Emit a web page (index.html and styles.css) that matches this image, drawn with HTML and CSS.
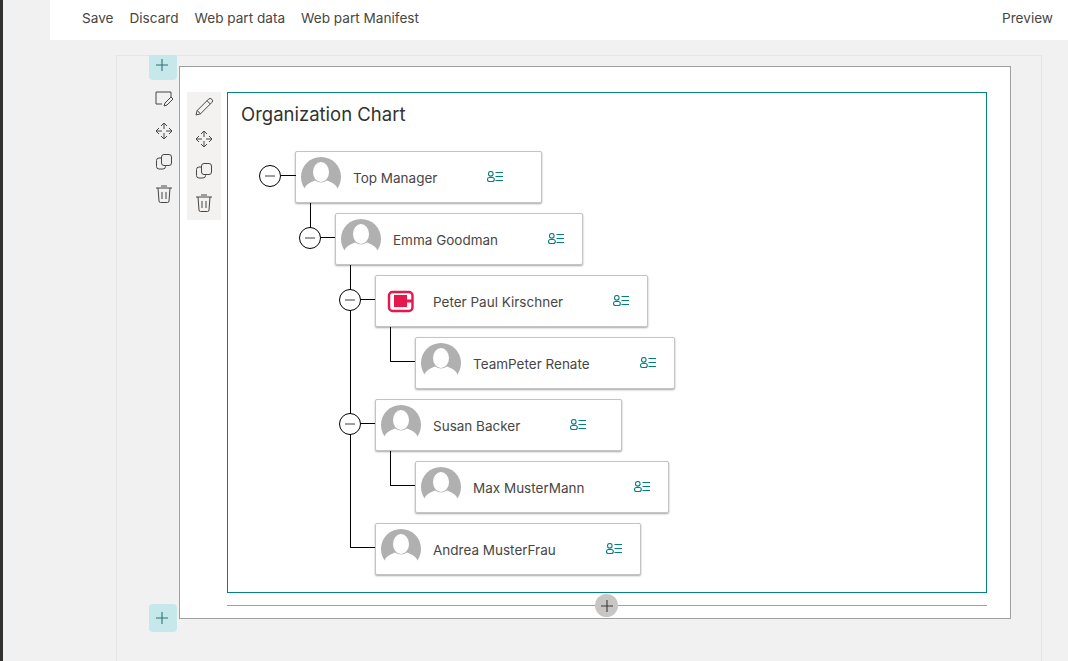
FILE: index.html
```html
<!DOCTYPE html>
<html lang="en">
<head>
<meta charset="UTF-8">
<title>Organization Chart</title>
<link rel="stylesheet" href="styles.css">
</head>
<body>
<svg class="defs" width="0" height="0">
    <symbol id="i-plus" viewBox="0 0 16 16"><path d="M8 2v12M2 8h12"/></symbol>
    <symbol id="i-sketch" viewBox="0 0 20 20"><path d="M8 15H2V3h15v5"/><path d="M10 17l1-3 6-6 2 2-6 6z"/></symbol>
    <symbol id="i-pencil" viewBox="0 0 20 20"><path d="M2 18l1.200-4.500L14.500 2.200a1.800 1.800 0 0 1 3.300 3.300L6.500 16.800z"/><path d="M3.200 13.500l3.300 3.300M13 3.700l3.300 3.300"/></symbol>
    <symbol id="i-move" viewBox="0 0 20 20"><path d="M7 5l3-3 3 3M7 15l3 3 3-3M5 7l-3 3 3 3M15 7l3 3-3 3"/><path d="M10 2v6M10 12v6M2 10h6M12 10h6"/></symbol>
    <symbol id="i-copy" viewBox="0 0 20 20"><rect x="7.500" y="2.500" width="10" height="11" rx="2.500"/><path d="M7 6H5a2.500 2.500 0 0 0-2.500 2.500v6A2.500 2.500 0 0 0 5 17h4a2.500 2.500 0 0 0 2.500-2.500V14"/></symbol>
    <symbol id="i-trash" viewBox="0 0 20 20"><path d="M2 4h16M4 4l1 13a1.500 1.500 0 0 0 1.500 1.500h7A1.500 1.500 0 0 0 15 17l1-13M7 2h6"/><path d="M8 8v7M12 8v7"/></symbol>
    <symbol id="i-avatar" viewBox="0 0 40 40"><circle cx="20" cy="20" r="20" fill="#b0b0b0"/><path d="M3 33c1-6 8-8 11-9.500 4 2.500 8 2.500 12 0 3 1.500 10 3.500 11 9.500l3 7H0z" fill="#fff"/><ellipse cx="20" cy="15" rx="8" ry="10" fill="#fff"/></symbol>
    <symbol id="i-team" viewBox="0 0 16 12"><circle cx="3.800" cy="2.800" r="2.300"/><rect x=".5" y="6.500" width="6.800" height="4" rx="2"/><path d="M8.500 1.500H16M8.500 5.500H16M8.500 9.500H16"/></symbol>
</svg>

<div class="rail"></div>
<div class="main">
    <div class="topbar">
        <div class="topbar-left">
            <span>Save</span>
            <span>Discard</span>
            <span>Web part data</span>
            <span>Web part Manifest</span>
        </div>
        <span>Preview</span>
    </div>

    <div class="canvas">
        <div class="section">
            <div class="add-btn add-top"><svg class="icon-plus"><use href="#i-plus"/></svg></div>
            <div class="tools tools-section">
                <svg class="tool"><use href="#i-sketch"/></svg>
                <svg class="tool"><use href="#i-move"/></svg>
                <svg class="tool"><use href="#i-copy"/></svg>
                <svg class="tool"><use href="#i-trash"/></svg>
            </div>
            <div class="tools tools-part">
                <svg class="tool"><use href="#i-pencil"/></svg>
                <svg class="tool"><use href="#i-move"/></svg>
                <svg class="tool"><use href="#i-copy"/></svg>
                <svg class="tool"><use href="#i-trash"/></svg>
            </div>

            <div class="webpart">
                <h2 class="title">Organization Chart</h2>
                <ul class="tree">
                    <li>
                        <div class="card">
                            <span class="toggle"></span>
                            <svg class="avatar"><use href="#i-avatar"/></svg>
                            <span class="name">Top Manager</span>
                            <svg class="team"><use href="#i-team"/></svg>
                        </div>
                        <ul>
                            <li>
                                <div class="card">
                                    <span class="toggle"></span>
                                    <svg class="avatar"><use href="#i-avatar"/></svg>
                                    <span class="name">Emma Goodman</span>
                                    <svg class="team"><use href="#i-team"/></svg>
                                </div>
                                <ul>
                                    <li>
                                        <div class="card">
                                            <span class="toggle"></span>
                                            <svg class="avatar" viewBox="0 0 40 40">
                                                <rect x="8" y="11" width="23.500" height="19" rx="3.500" fill="#fff" stroke="#e8174b" stroke-width="2.400"/>
                                                <path d="M13 14h13v4.500h6v3h-6V26H13z" fill="#e8174b"/>
                                            </svg>
                                            <span class="name">Peter Paul Kirschner</span>
                                            <svg class="team"><use href="#i-team"/></svg>
                                        </div>
                                        <ul>
                                            <li>
                                                <div class="card">
                                                    <svg class="avatar"><use href="#i-avatar"/></svg>
                                                    <span class="name">TeamPeter Renate</span>
                                                    <svg class="team"><use href="#i-team"/></svg>
                                                </div>
                                            </li>
                                        </ul>
                                    </li>
                                    <li>
                                        <div class="card">
                                            <span class="toggle"></span>
                                            <svg class="avatar"><use href="#i-avatar"/></svg>
                                            <span class="name">Susan Backer</span>
                                            <svg class="team"><use href="#i-team"/></svg>
                                        </div>
                                        <ul>
                                            <li>
                                                <div class="card">
                                                    <svg class="avatar"><use href="#i-avatar"/></svg>
                                                    <span class="name">Max MusterMann</span>
                                                    <svg class="team"><use href="#i-team"/></svg>
                                                </div>
                                            </li>
                                        </ul>
                                    </li>
                                    <li>
                                        <div class="card">
                                            <svg class="avatar"><use href="#i-avatar"/></svg>
                                            <span class="name">Andrea MusterFrau</span>
                                            <svg class="team"><use href="#i-team"/></svg>
                                        </div>
                                    </li>
                                </ul>
                            </li>
                        </ul>
                    </li>
                </ul>
            </div>

            <div class="divider">
                <span class="divider-btn"><svg class="icon-plus"><use href="#i-plus"/></svg></span>
            </div>
            <div class="add-btn add-bottom"><svg class="icon-plus"><use href="#i-plus"/></svg></div>
        </div>
    </div>
</div>
</body>
</html>
```

FILE: styles.css
```css
html, body {
    height: 100%;
}
body {
    margin: 0;
    display: flex;
    overflow: hidden;
    background-color: #f1f1f1;
    color: #323130;
    font-family: 'Inter', 'Liberation Sans', sans-serif;
    font-size: 13.600px;
}
.defs {
    position: absolute;
}
.rail {
    width: 3px;
    background-color: #323130;
}
.main {
    flex: 1;
    min-width: 0;
    padding-left: 47px;
}

/* top command bar */
.topbar {
    box-sizing: border-box;
    height: 40px;
    padding: 0 15px 4px 32px;
    background-color: #fff;
    display: flex;
    align-items: center;
    justify-content: space-between;
    color: #484644;
}
.topbar-left {
    display: flex;
    gap: 16px;
}

/* page canvas */
.canvas {
    height: 606px;
    margin: 15px 26px 0 66px;
    border: 1px solid #e5e5e5;
    border-bottom: none;
}
.section {
    position: relative;
    box-sizing: border-box;
    width: 832px;
    height: 553px;
    margin: 10px 0 0 62px;
    padding: 25px 23px 0 47px;
    background-color: #fff;
    border: 1px solid #a0a0a0;
}
.add-btn {
    position: absolute;
    left: -31px;
    width: 28px;
    box-sizing: border-box;
    padding-right: 2px;
    display: flex;
    align-items: center;
    justify-content: center;
    background-color: #c7e8ea;
}
.add-top {
    top: -12px;
    height: 25px;
    padding-bottom: 5px;
    border-radius: 0 0 4px 4px;
}
.add-bottom {
    top: 537px;
    height: 28px;
    padding-bottom: 1px;
    border-radius: 4px;
}
.icon-plus {
    width: 16px;
    height: 16px;
    fill: none;
    stroke: #2b7377;
    stroke-width: 1.100;
}
.tools {
    position: absolute;
    display: flex;
    flex-direction: column;
    align-items: center;
    gap: 12px;
}
.tools-section {
    left: -26px;
    top: 22px;
    gap: 11.600px;
}
.tools-part {
    left: 7px;
    top: 25px;
    width: 34px;
    height: 128px;
    box-sizing: border-box;
    padding-top: 5px;
    background-color: #f3f2f1;
}
.tool {
    width: 20px;
    height: 20px;
    fill: none;
    stroke: #484644;
    stroke-width: 1;
}

/* web part */
.webpart {
    box-sizing: border-box;
    height: 501px;
    padding: 10px 13px 0;
    border: 1px solid #038387;
}
.title {
    margin: 0 0 26px;
    font-size: 18.500px;
    font-weight: 400;
    line-height: 22px;
}
.tree, .tree ul {
    list-style: none;
    margin: 0;
    padding: 0;
}
.tree {
    padding-left: 54px;
}
.tree ul {
    padding-left: 40px;
}
.tree li {
    position: relative;
    padding-top: 10px;
}
.tree > li {
    padding-top: 0;
}

/* connector lines */
.tree ul li::before {
    content: "";
    position: absolute;
    left: -25px;
    top: 0;
    height: 34px;
    border-left: 1px solid #000;
}
.tree ul li:not(:last-child)::before {
    height: 100%;
}
.tree ul li::after {
    content: "";
    position: absolute;
    left: -25px;
    top: 34px;
    width: 25px;
    border-top: 1px solid #000;
}
.card {
    position: relative;
    box-sizing: border-box;
    width: fit-content;
    min-width: 247px;
    height: 52px;
    padding: 0 18px 0 5px;
    display: flex;
    align-items: center;
    background-color: #fff;
    border: 1px solid #c4c4c4;
    border-radius: 2px;
    box-shadow: 0 1px 2px rgba(0, 0, 0, 0.35);
}
.toggle {
    position: absolute;
    left: -37px;
    top: 13px;
    z-index: 1;
    box-sizing: border-box;
    width: 22px;
    height: 22px;
    border: 1px solid #000;
    border-radius: 50%;
    background-color: #fff;
}
.toggle::before {
    content: "";
    position: absolute;
    left: 5px;
    top: 9px;
    width: 10px;
    height: 2px;
    background-color: #a19f9d;
}
.tree > li > .card::before {
    content: "";
    position: absolute;
    left: -15px;
    top: 23px;
    width: 15px;
    border-top: 1px solid #000;
}
.avatar {
    flex: none;
    width: 40px;
    height: 40px;
}
.name {
    margin-left: 12px;
    font-size: 13.500px;
    color: #484644;
    line-height: 20px;
    position: relative;
    top: 1px;
}
.team {
    flex: none;
    width: 16px;
    height: 12px;
    margin-left: 50px;
    fill: none;
    stroke: #037f80;
    stroke-width: 1.100;
}

/* add bar under the web part */
.divider {
    position: relative;
    margin-top: 12px;
    width: 760px;
    border-top: 1px solid #a0a0a0;
}
.divider-btn {
    position: absolute;
    left: 368px;
    top: -12px;
    width: 23px;
    height: 23px;
    border-radius: 50%;
    background-color: #c8c6c4;
    display: flex;
    align-items: center;
    justify-content: center;
}
.divider-btn .icon-plus {
    stroke: #3b3a39;
}
```
